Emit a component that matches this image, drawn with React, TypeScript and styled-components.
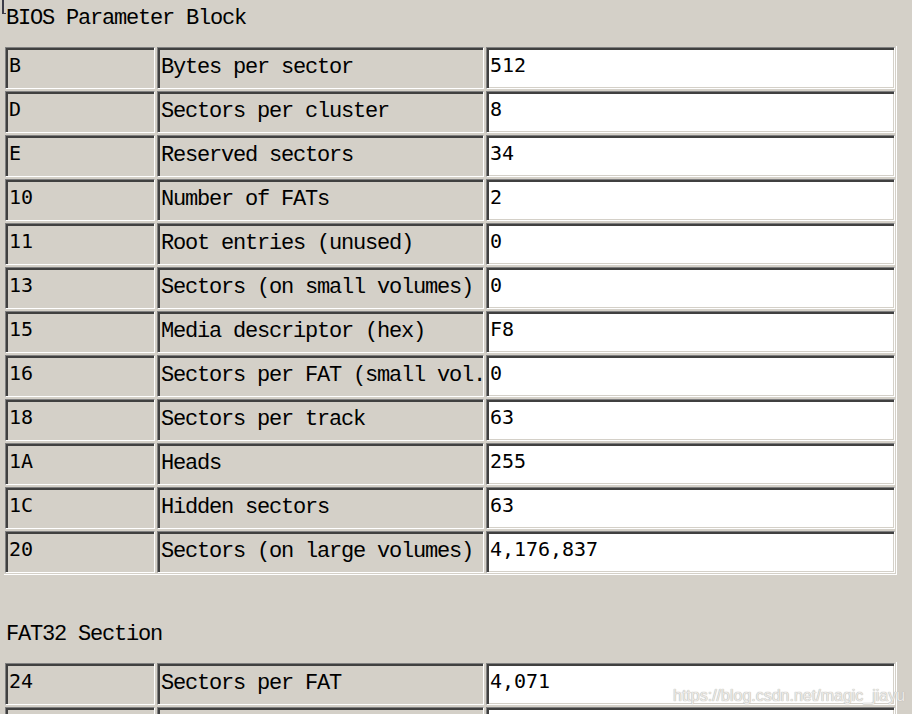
import React from "react";
import styled, { createGlobalStyle } from "styled-components";

const GlobalStyle = createGlobalStyle`
  html, body {
    margin: 0;
    padding: 0;
    background: #d4d0c8;
  }
  body {
    font-family: "Liberation Mono", "Courier New", monospace;
    color: #000;
  }
`;

const Page = styled.div`
  position: relative;
  width: 912px;
  height: 714px;
  overflow: hidden;
  background: #d4d0c8;
  padding: 4px 0 0 0;
  box-sizing: border-box;
`;

const Section = styled.section<{ $gapTop?: number }>`
  display: flex;
  flex-direction: column;
  align-items: flex-start;
  gap: 18px;
  margin-top: ${(p) => p.$gapTop ?? 0}px;
`;

const Title = styled.div`
  margin-left: 6px;
  height: 24px;
  padding-top: 3px;
  box-sizing: border-box;
  font-family: "Liberation Mono", "Courier New", monospace;
  font-size: 22px;
  line-height: 24px;
  letter-spacing: -1.2px;
  white-space: pre;
`;

const Table = styled.div`
  margin-left: 4px;
  display: grid;
  grid-template-columns: 150px 327px 409px;
  grid-auto-rows: 42px;
  gap: 2px;
  padding: 1px;
  border-right: 1px solid #ffffff;
  border-bottom: 1px solid #ffffff;
`;

const Cell = styled.div<{ $kind: "offset" | "label" | "value" }>`
  box-sizing: border-box;
  border-style: solid;
  border-width: 1px;
  border-color: #808080 #ffffff #ffffff #808080;
  box-shadow: inset 2px 2px 0 #404040, inset -1px -1px 0 #d4d0c8;
  background: ${(p) => (p.$kind === "value" ? "#ffffff" : "#d4d0c8")};
  padding: ${(p) => (p.$kind === "label" ? "8px 0 0 3px" : "5px 0 0 3px")};
  overflow: hidden;
  white-space: pre;
  line-height: 24px;
  font-family: ${(p) =>
    p.$kind === "label"
      ? `"Liberation Mono", "Courier New", monospace`
      : `"DejaVu Sans Mono", "Liberation Mono", monospace`};
  font-size: ${(p) => (p.$kind === "label" ? "22px" : "20px")};
  letter-spacing: ${(p) => (p.$kind === "label" ? "-1.2px" : "-0.04px")};
`;

const CornerMark = styled.div`
  position: absolute;
  left: 2px;
  top: 0;
  width: 4px;
  height: 14px;
  border-left: 2px solid #3c3c48;
  border-bottom: 1px solid #3c3c48;
  box-sizing: border-box;
`;

const Watermark = styled.div`
  position: absolute;
  left: 673px;
  top: 686px;
  font-family: "Liberation Sans", Arial, sans-serif;
  font-size: 16px;
  line-height: 20px;
  letter-spacing: 0;
  color: #ebe9e6;
  text-shadow: 0 0 1px #b0aeaa, 0 0 1px #c4c2be;
  white-space: nowrap;
  pointer-events: none;
`;

type Row = [string, string, string];

const bpb: Row[] = [
  ["B", "Bytes per sector", "512"],
  ["D", "Sectors per cluster", "8"],
  ["E", "Reserved sectors", "34"],
  ["10", "Number of FATs", "2"],
  ["11", "Root entries (unused)", "0"],
  ["13", "Sectors (on small volumes)", "0"],
  ["15", "Media descriptor (hex)", "F8"],
  ["16", "Sectors per FAT (small vol.", "0"],
  ["18", "Sectors per track", "63"],
  ["1A", "Heads", "255"],
  ["1C", "Hidden sectors", "63"],
  ["20", "Sectors (on large volumes)", "4,176,837"],
];

const fat32: Row[] = [
  ["24", "Sectors per FAT", "4,071"],
  ["28", "", ""],
];

const DataTable: React.FC<{ rows: Row[] }> = ({ rows }) => (
  <Table>
    {rows.map(([o, l, v]) => (
      <React.Fragment key={o}>
        <Cell $kind="offset">{o}</Cell>
        <Cell $kind="label">{l}</Cell>
        <Cell $kind="value">{v}</Cell>
      </React.Fragment>
    ))}
  </Table>
);

export default function App() {
  return (
    <>
      <GlobalStyle />
      <Page>
        <CornerMark />
        <Section>
          <Title>BIOS Parameter Block</Title>
          <DataTable rows={bpb} />
        </Section>
        <Section $gapTop={45}>
          <Title>FAT32 Section</Title>
          <DataTable rows={fat32} />
        </Section>
        <Watermark>https://blog.csdn.net/magic_jiayu</Watermark>
      </Page>
    </>
  );
}
